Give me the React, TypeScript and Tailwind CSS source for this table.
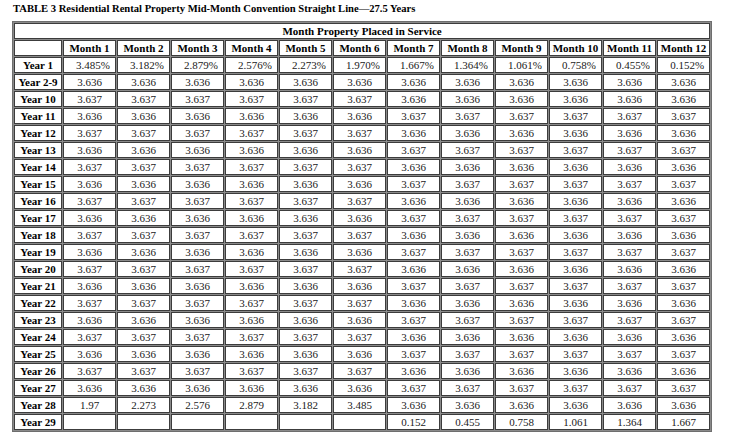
const months = [1, 2, 3, 4, 5, 6, 7, 8, 9, 10, 11, 12];

const firstYear = ["3.485%", "3.182%", "2.879%", "2.576%", "2.273%", "1.970%", "1.667%", "1.364%", "1.061%", "0.758%", "0.455%", "0.152%"];

type Row = { label: string; values: string[]; right?: boolean };

function buildRows(): Row[] {
  const rows: Row[] = [{ label: "Year 1", values: firstYear, right: true }];
  rows.push({ label: "Year 2-9", values: months.map(() => "3.636") });
  for (let y = 10; y <= 27; y++) {
    const even = y % 2 === 0;
    rows.push({
      label: `Year ${y}`,
      values: months.map((m) => (m <= 6 ? (even ? "3.637" : "3.636") : even ? "3.636" : "3.637")),
    });
  }
  rows.push({
    label: "Year 28",
    values: ["1.97", "2.273", "2.576", "2.879", "3.182", "3.485", "3.636", "3.636", "3.636", "3.636", "3.636", "3.636"],
  });
  rows.push({
    label: "Year 29",
    values: ["", "", "", "", "", "", "0.152", "0.455", "0.758", "1.061", "1.364", "1.667"],
  });
  return rows;
}

const cell = "border border-[#3c3c3c] bg-white h-[16px] p-0 leading-none align-middle";

export default function App() {
  const rows = buildRows();

  return (
    <div className="min-h-screen w-full bg-white pt-[2px] pl-[12px] font-['Liberation_Serif',serif] text-black">
      <div className="text-[10.6px] font-bold leading-[14px] pl-[1px]">
        TABLE 3 Residential Rental Property Mid-Month Convention Straight Line—27.5 Years
      </div>

      <table className="mt-[5px] w-[700px] table-fixed border-separate border-spacing-[1px] border border-[#6e6e6e] bg-[#8a8a8a] text-[11px]">
        <colgroup>
          <col className="w-[48px]" />
          {months.map((m) => (
            <col key={m} className="w-[53px]" />
          ))}
        </colgroup>
        <thead>
          <tr>
            <th colSpan={13} className={`${cell} font-bold text-center`}>
              Month Property Placed in Service
            </th>
          </tr>
          <tr>
            <th className={cell}></th>
            {months.map((m) => (
              <th key={m} className={`${cell} font-bold text-center`}>
                Month {m}
              </th>
            ))}
          </tr>
        </thead>
        <tbody>
          {rows.map((row) => (
            <tr key={row.label}>
              <th className={`${cell} font-bold text-center`}>{row.label}</th>
              {row.values.map((v, i) => (
                <td
                  key={i}
                  className={`${cell} text-[#1a1a1a] ${row.right ? "text-right pr-[5px]" : "text-center"}`}
                >
                  {v}
                </td>
              ))}
            </tr>
          ))}
        </tbody>
      </table>
    </div>
  );
}
